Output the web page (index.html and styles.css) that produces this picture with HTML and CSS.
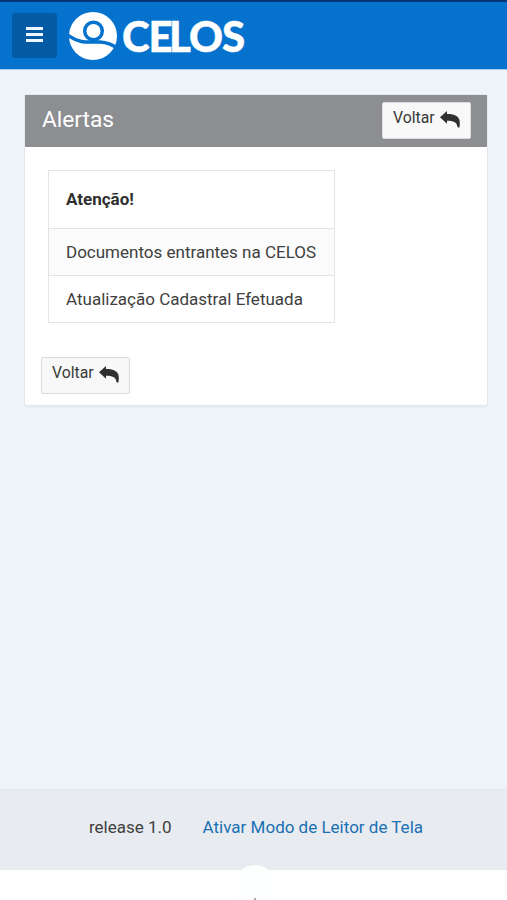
FILE: index.html
```html
<!DOCTYPE html>
<html lang="pt-BR">
<head>
<meta charset="utf-8">
<title>CELOS - Alertas</title>
<link rel="stylesheet" href="styles.css">
</head>
<body>
<svg class="sprite" aria-hidden="true">
  <symbol id="reply" viewBox="0 0 20 17">
    <path d="M0 6.300 7 0v3C14 2.800 19.800 5 19.800 11.500c0 2.300-.1 4-.6 5.200-.9 0-1.700-.4-1.900-1.100C17 11.200 13 9.800 7 9.800v3Z"/>
  </symbol>
</svg>
<header class="header">
  <button class="menu" aria-label="Menu"><span></span><span></span><span></span></button>
  <svg class="logo" viewBox="0 0 180 50" role="img" aria-label="CELOS">
    <circle cx="25" cy="24" r="24" fill="#fff"/>
    <path d="M0 23.500C13 32.500 21 29.500 32 30 40 30.500 45 33 50 36.500" fill="none" stroke="#0572ce" stroke-width="3.500"/>
    <circle cx="25.500" cy="19" r="8.800" fill="#fff" stroke="#0572ce" stroke-width="3.500"/>
    <text class="wordmark" y="39.500" x="54 80.500 101 121 154">CELOS</text>
  </svg>
</header>
<main class="main">
  <section class="region">
    <div class="region-head">
      <h1>Alertas</h1>
      <button class="btn">Voltar<svg><use href="#reply"/></svg></button>
    </div>
    <div class="region-body">
      <table class="report">
        <thead><tr><th>Atenção!</th></tr></thead>
        <tbody>
          <tr><td>Documentos entrantes na CELOS</td></tr>
          <tr><td>Atualização Cadastral Efetuada</td></tr>
        </tbody>
      </table>
      <button class="btn">Voltar<svg><use href="#reply"/></svg></button>
    </div>
  </section>
</main>
<footer class="footer">
  <span>release 1.0</span>
  <a>Ativar Modo de Leitor de Tela</a>
</footer>
<div class="bottom"><i class="bump"></i><i class="dot"></i></div>
</body>
</html>
```
FILE: styles.css
```css
* { box-sizing: border-box; }
body {
  margin: 0;
  height: 900px;
  display: flex;
  flex-direction: column;
  overflow: hidden;
  background: #eff4f8;
  color: #404040;
  font: 17px/20px Roboto, sans-serif;
}
.sprite { position: absolute; width: 0; height: 0; }
button { font: inherit; color: inherit; }
.header {
  height: 70px;
  flex: none;
  display: flex;
  align-items: flex-start;
  padding: 11px 12px 0;
  border-top: 2px solid #043577;
  border-bottom: 1px solid #a9cdee;
  background: #0572ce;
}
.menu {
  width: 45px;
  height: 45px;
  margin-right: 11px;
  padding: 0 0 2px;
  border: 0;
  border-radius: 3px;
  background: #045aa3;
  display: flex;
  flex-direction: column;
  align-items: center;
  justify-content: center;
  gap: 3px;
}
.menu span { width: 17px; height: 3px; background: #edf7ff; }
.logo { width: 180px; height: 50px; margin-top: -1px; }
.wordmark { font: 900 42px Lato, sans-serif; fill: #fff; stroke: #fff; stroke-width: .4px; }
.main { flex: 1; padding: 25px 20px 0 25px; }
.region {
  height: 310px;
  width: 462px;
  border-radius: 2px;
  background: #fff;
  box-shadow: 0 0 0 1px #e5e9ed, 0 2px 3px rgba(0, 0, 0, .06);
}
.region-head {
  height: 52px;
  padding: 0 16px 2px 17px;
  display: flex;
  align-items: center;
  justify-content: space-between;
  background: #8d8e92;
}
h1 { margin: 0; font-size: 22.700px; line-height: 28px; font-weight: 400; color: #fff; }
.btn {
  width: 89px;
  height: 37px;
  padding: 0 10px 4px;
  display: flex;
  align-items: center;
  justify-content: space-between;
  border: 1px solid #dcdcdc;
  border-radius: 2px;
  background: #f8f8f8;
  color: #383838;
  font-size: 15.800px;
}
.btn svg { width: 20px; height: 17px; margin-top: 3px; fill: #303030; }
.region-body { padding: 23px 16px 0; }
.region-body .btn { padding-bottom: 5px; }
.report {
  width: 287px;
  margin: 0 0 34px 7px;
  border-collapse: collapse;
}
.report th, .report td {
  height: 47px;
  padding: 0 0 0 17px;
  border: 1px solid #e4e4e4;
  text-align: left;
  white-space: nowrap;
}
.report th { height: 58px; padding-bottom: 2px; font-weight: 700; color: #303030; }
.report tbody tr:first-child td { background: #fbfbfb; }
.footer {
  height: 81px;
  flex: none;
  display: flex;
  gap: 31px;
  padding: 27px 0 0 89px;
  border-top: 1px solid #e2e6ea;
  background: #e8ecf0;
}
.footer a { color: #1b6fb3; }
.bottom { height: 30px; flex: none; position: relative; background: #fff; }
.bump {
  position: absolute;
  left: 233px;
  top: -5px;
  width: 44px;
  height: 44px;
  border-radius: 50%;
  background: #fdfefe;
}
.dot { position: absolute; left: 254px; top: 28px; width: 2px; height: 2px; background: #aaa; }
```
